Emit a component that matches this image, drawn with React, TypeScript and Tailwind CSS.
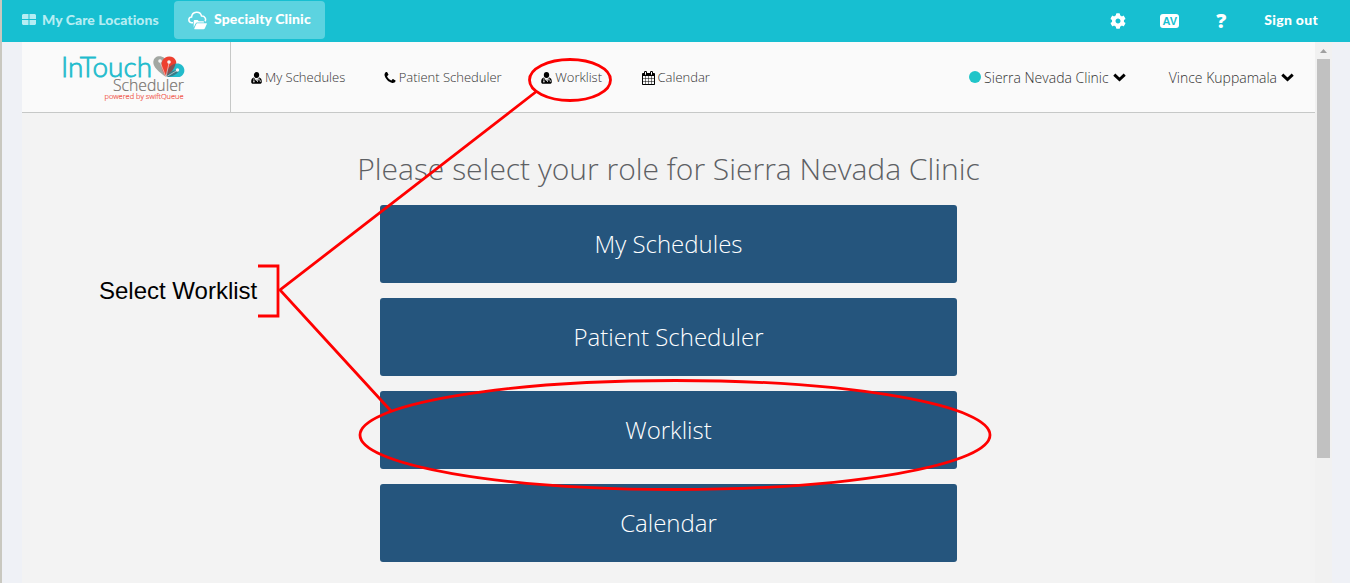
import type { ReactNode } from "react";
import { FaCog } from "react-icons/fa";

const roles = ["My Schedules", "Patient Scheduler", "Worklist", "Calendar"];

function DoctorIcon() {
  return (
    <svg width="11" height="12" viewBox="0 0 11 12">
      <ellipse cx="5.5" cy="3.1" rx="2.7" ry="3" />
      <path d="M2.6 5.6C.8 6.2.2 7.800.2 10c0 1.200.7 1.800 1.900 1.800h6.800c1.200 0 1.900-.6 1.900-1.800 0-2.200-.6-3.800-2.400-4.400L5.500 8z" />
      <path d="M2.900 6.300v3M7.900 6.300v1.400M6.500 10V8.700c0-1.300 2.800-1.300 2.800 0V10M4 6.800l1.500 2 1.500-2" fill="none" stroke="#fafafa" strokeWidth=".75" />
      <circle cx="2.900" cy="9.700" r=".8" fill="#fafafa" />
    </svg>
  );
}

function PhoneIcon() {
  return (
    <svg width="14" height="14" viewBox="0 0 1792 1792" className="-ml-0.5 -mr-px">
      <path d="M1600 1240q0 27-10 70.5t-21 68.5q-21 50-122 106-94 51-186 51-27 0-53-3.5t-57.5-12.5-47-14.5-55.5-20.5-49-18q-98-35-175-83-127-79-264-216t-216-264q-48-77-83-175-3-9-18-49t-20.5-55.5-14.5-47-12.5-57.5-3.500-53q0-92 51-186 56-101 106-122 25-11 68.5-21t70.5-10q14 0 21 3 18 6 53 76 11 19 30 54t35 63.5 31 53.5q3 4 17.5 25t21.5 35.5 7 28.5q0 20-28.5 50t-62 55-62 53-28.5 46q0 9 5 22.5t8.5 20.5 14 24 11.5 19q76 137 174 235t235 174q2 1 19 11.5t24 14 20.5 8.5 22.5 5q18 0 46-28.500t53-62 55-62 50-28.500q14 0 28.500 7t35.500 21.500 25 17.500q25 15 53.500 31t63.500 35 54 30q70 35 76 53 3 7 3 21z" />
    </svg>
  );
}

function CalendarIcon() {
  return (
    <svg width="13" height="14" viewBox="64 0 1664 1792">
      <path d="M192 1664h288v-288h-288v288zm352 0h320v-288h-320v288zm-352-352h288v-320h-288v320zm352 0h320v-320h-320v320zm-352-384h288v-288h-288v288zm736 736h320v-288h-320v288zm-384-736h320v-288h-320v288zm768 736h288v-288h-288v288zm-384-352h320v-320h-320v320zm-352-864v-288q0-13-9.5-22.5t-22.5-9.5h-64q-13 0-22.5 9.5t-9.5 22.5v288q0 13 9.5 22.5t22.5 9.5h64q13 0 22.5-9.5t9.5-22.5zm736 864h288v-320h-288v320zm-384-384h320v-288h-320v288zm384 0h288v-288h-288v288zm32-480v-288q0-13-9.5-22.5t-22.5-9.5h-64q-13 0-22.5 9.5t-9.5 22.5v288q0 13 9.5 22.5t22.5 9.5h64q13 0 22.5-9.5t9.5-22.5zm384-64v1280q0 52-38 90t-90 38h-1408q-52 0-90-38t-38-90v-1280q0-52 38-90t90-38h128v-96q0-66 47-113t113-47h64q66 0 113 47t47 113v96h384v-96q0-66 47-113t113-47h64q66 0 113 47t47 113v96h128q52 0 90 38t38 90z" />
    </svg>
  );
}

function Chevron() {
  return (
    <svg width="13" height="9" viewBox="0 0 13 9" fill="none" stroke="#000" strokeWidth="3">
      <path d="M1.300 1.700 6.500 6.500l5.200-4.800" />
    </svg>
  );
}

function CloudFolder() {
  return (
    <svg width="19" height="19" viewBox="0 0 19 19">
      <path d="M5 11.700H3.500C-.2 11 .1 6.300 3.600 6 4 .1 12.300-.5 13.500 5c3.500-.2 5 3.300 3.400 5.300" fill="none" stroke="#fff" strokeWidth="1.500" />
      <path d="M5.700 10.300c0-1 .5-1.300 1.300-1.300h2.600l1.200 1.300h4.200c.8 0 1 .5 1 1.200H9.300c-1 0-1.600.6-2 1.500l-1.600 3.500z" fill="#fff" />
      <path d="M9.300 12.300h8.900c.7 0 .8.500.5 1l-1.800 4c-.3.600-.7.900-1.400.9H7c-.7 0-.9-.4-.6-1l1.900-4.200c.2-.5.500-.7 1-.7z" fill="#fff" />
    </svg>
  );
}

function Logo() {
  return (
    <svg width="126" height="50" viewBox="0 0 126 50" className="overflow-visible">
      <text x="-1" y="24" fontFamily="Lato" fontSize="28" fill="#1fbccd" stroke="#1fbccd" strokeWidth=".8" textLength="91" lengthAdjust="spacingAndGlyphs">InTouch</text>
      <path d="M104 24C97 19 91 14 91.300 9 91.700 3 98 1.500 102.500 5l3 7z" fill="#a2a7a2" />
      <path d="M104 24c-4-6-6-12-3.500-16.500C103.500 2 112 2.500 114 8c1.500 5-3 10-10 16z" fill="#ee4030" />
      <path d="M104 24c2-7 6-13.500 11-13.500 8.500 0 10 11 2.500 13.500z" fill="#22bbcb" />
      <path d="M104 24c0-7 3-11.500 9.500-13.500C113 15 109 20 104 24z" fill="#805456" />
      <path d="M104 24c3-5 8-7.500 13-6.500-2 4-7 6.500-13 6.500z" fill="#397b87" />
      <path d="M104 24 98 9M104 24l3-14M104 24l11-6.500" stroke="#f0f0f0" strokeWidth=".6" />
      <circle cx="98" cy="8" r="1.800" fill="#f4f4f4" />
      <circle cx="107" cy="9" r="1.800" fill="#f4f4f4" />
      <circle cx="115.500" cy="17" r="1.700" fill="#f4f4f4" />
      <text x="51" y="37.500" fontFamily="Open Sans" fontSize="15.500" fill="#77736f" stroke="#77736f" strokeWidth=".2" textLength="71" lengthAdjust="spacingAndGlyphs">Scheduler</text>
      <text x="42.500" y="46" fontFamily="Open Sans" fontSize="7" fill="#f15044" stroke="#f15044" strokeWidth=".15" textLength="79" lengthAdjust="spacingAndGlyphs">powered by swiftQueue</text>
    </svg>
  );
}

function NavItem({ icon, children }: { icon: ReactNode; children: ReactNode }) {
  return (
    <a className="flex shrink-0 items-center gap-[3px] whitespace-nowrap">
      {icon}
      <span>{children}</span>
    </a>
  );
}

function Annotations() {
  return (
    <div className="pointer-events-none absolute inset-0">
      <span className="absolute left-[99px] top-[277px] whitespace-nowrap font-['Liberation_Sans',sans-serif] text-[24px] leading-[28px] text-black">Select Worklist</span>
      <svg width="1350" height="583" viewBox="0 0 1350 583" className="absolute inset-0" fill="none" stroke="#f00" strokeWidth="2.800">
        <ellipse cx="570" cy="80" rx="40.500" ry="20.500" />
        <path d="M537 91 280 290l111 121" />
        <path d="M258 266h20v50h-20" />
        <ellipse cx="675" cy="435" rx="315" ry="54.500" />
      </svg>
    </div>
  );
}

export default function App() {
  return (
    <div className="relative flex h-[583px] w-[1350px] flex-col overflow-hidden border-l-2 border-[#c9c8c0] bg-[#eff1f6] font-['Open_Sans',sans-serif]">
      <header className="flex h-[42px] shrink-0 items-center bg-[#17bfd1] pb-[3px] font-['Lato',sans-serif] text-[14px] font-black text-white">
        <div className="flex w-[172px] items-center gap-[6px] pl-[20px] tracking-[0.04px] text-[#b5edf3]">
          <svg width="14" height="11" viewBox="0 0 14 11" fill="currentColor">
            <path d="M1 0h5.500v5H0V1zM7.500 0H13l1 1v4H7.500zM0 6h6.500v5H1l-1-1zM7.500 6H14v4l-1 1H7.500z" />
          </svg>
          <span className="-mt-px whitespace-nowrap">My Care Locations</span>
        </div>
        <div className="mt-px flex h-[38px] w-[151px] items-center gap-[7px] rounded bg-[#5cd3e0] pl-[14px]">
          <CloudFolder />
          <span className="-mt-[3px] whitespace-nowrap tracking-[0.13px]">Specialty Clinic</span>
        </div>
        <div className="ml-auto flex items-center pr-[32px]">
          <FaCog className="mt-0.5 h-4 w-4" />
          <span className="ml-[34px] mt-[3px] flex h-[14px] w-[19px] items-center justify-center rounded-[3px] bg-white font-['Liberation_Sans',sans-serif] text-[11px] font-bold text-[#17bfd1]">AV</span>
          <span className="ml-[36px] mt-[3px] w-3 text-center font-['Open_Sans',sans-serif] text-[20px] font-extrabold leading-4">?</span>
          <span className="ml-[37px] whitespace-nowrap tracking-[0.3px]">Sign out</span>
        </div>
      </header>
      <div className="ml-5 flex flex-1">
        <div className="flex w-[1293px] shrink-0 flex-col bg-[#f3f3f3]">
          <div className="flex h-[71px] shrink-0 items-center border-b border-[#c6c8c7] bg-[#fafafa] text-[13px] font-light text-[#333]">
            <div className="h-full w-[209px] shrink-0 border-r border-[#c6c8c7] pl-10 pt-[11px]">
              <Logo />
            </div>
            <nav className="mt-px flex w-[480px] shrink-0 items-center gap-[39.500px] pl-5">
              <NavItem icon={<DoctorIcon />}>My Schedules</NavItem>
              <NavItem icon={<PhoneIcon />}>Patient Scheduler</NavItem>
              <NavItem icon={<DoctorIcon />}>Worklist</NavItem>
              <NavItem icon={<CalendarIcon />}>Calendar</NavItem>
            </nav>
            <div className="ml-auto flex items-center gap-[43px] pr-[21px] text-[14px]">
              <div className="flex items-center">
                <i className="mr-[3px] h-3 w-3 rounded-full bg-[#20c5c9]" />
                <span className="mr-1">Sierra Nevada Clinic</span>
                <Chevron />
              </div>
              <div className="flex items-center">
                <span className="mr-1">Vince Kuppamala</span>
                <Chevron />
              </div>
            </div>
          </div>
          <main className="flex flex-col items-center">
            <h1 className="mt-[36px] h-[56px] whitespace-nowrap text-[30px] font-light leading-[40px] text-[#5d6063]">Please select your role for Sierra Nevada Clinic</h1>
            <div className="flex flex-col gap-[15px]">
              {roles.map((role) => (
                <button key={role} className="h-[78px] w-[577px] rounded-[3px] bg-[#25557d] text-[24px] font-light text-white">{role}</button>
              ))}
            </div>
          </main>
        </div>
        <div className="flex w-[17px] shrink-0 flex-col items-center bg-[#f1f1f1]">
          <svg width="7" height="17" viewBox="0 0 7 17"><path d="M0 11h7L3.500 7z" fill="#a0a0a0" /></svg>
          <div className="h-[399px] w-[13px] bg-[#c1c1c1]" />
        </div>
      </div>
      <div className="absolute inset-y-0 -left-0.5 w-[1350px]"><Annotations /></div>
    </div>
  );
}
